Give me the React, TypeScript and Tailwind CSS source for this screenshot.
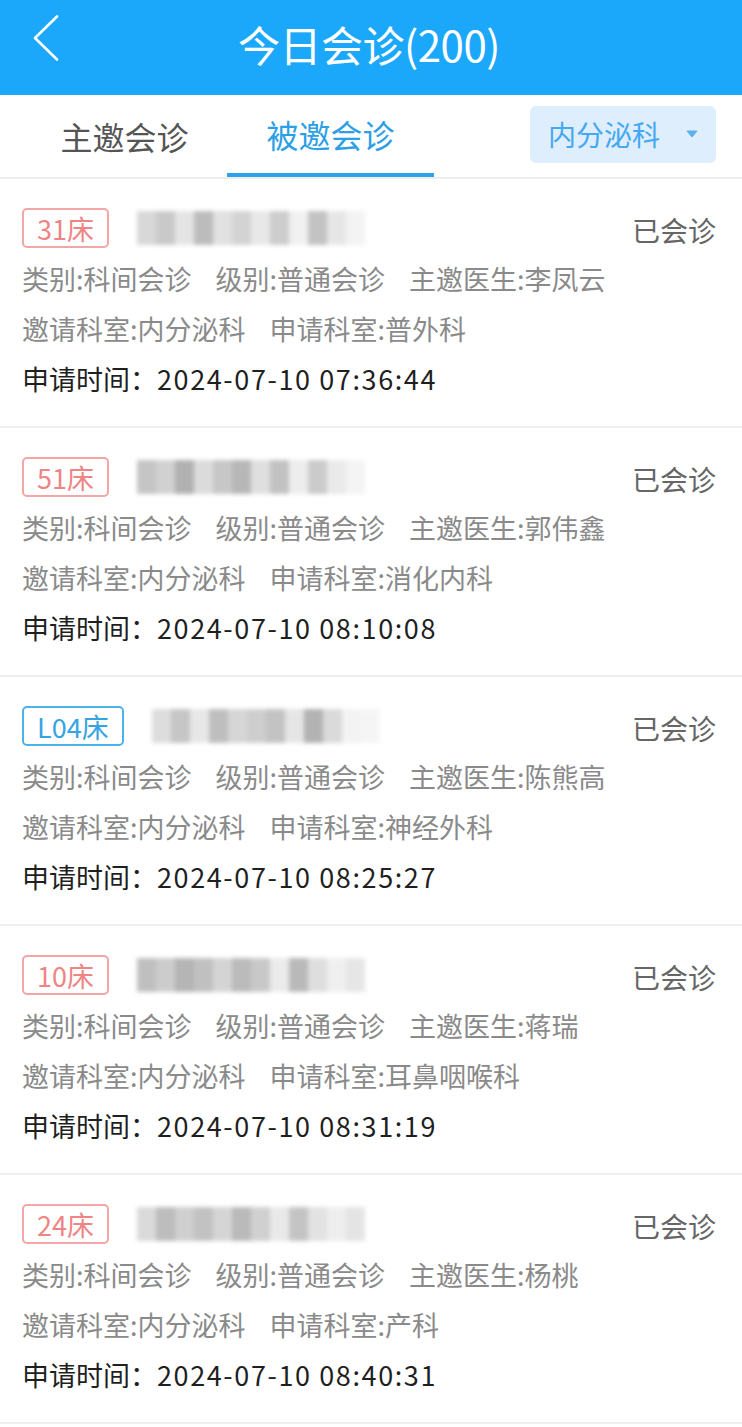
import React from 'react';

type Consult = {
  bed: string;
  tone: 'red' | 'blue';
  doctor: string;
  fromDept: string;
  time: string;
  blur: string[];
};

const consults: Consult[] = [
  {
    bed: '31床',
    tone: 'red',
    doctor: '李凤云',
    fromDept: '普外科',
    time: '2024-07-10 07:36:44',
    blur: ['bg-[#d4d4d4]', 'bg-[#c4c4c4]', 'bg-[#e2e2e2]', 'bg-[#b5b5b5]', 'bg-[#dedede]', 'bg-[#cfcfcf]', 'bg-[#e6e6e6]', 'bg-[#c8c8c8]', 'bg-[#f0f0f0]', 'bg-[#bdbdbd]', 'bg-[#e4e4e4]', 'bg-[#f2f2f2]'],
  },
  {
    bed: '51床',
    tone: 'red',
    doctor: '郭伟鑫',
    fromDept: '消化内科',
    time: '2024-07-10 08:10:08',
    blur: ['bg-[#bfbfbf]', 'bg-[#cdcdcd]', 'bg-[#a9a9a9]', 'bg-[#d8d8d8]', 'bg-[#c2c2c2]', 'bg-[#b0b0b0]', 'bg-[#dcdcdc]', 'bg-[#bcbcbc]', 'bg-[#ececec]', 'bg-[#c6c6c6]', 'bg-[#e8e8e8]', 'bg-[#f3f3f3]'],
  },
  {
    bed: 'L04床',
    tone: 'blue',
    doctor: '陈熊高',
    fromDept: '神经外科',
    time: '2024-07-10 08:25:27',
    blur: ['bg-[#dadada]', 'bg-[#c0c0c0]', 'bg-[#e5e5e5]', 'bg-[#b8b8b8]', 'bg-[#d2d2d2]', 'bg-[#c9c9c9]', 'bg-[#bdbdbd]', 'bg-[#e3e3e3]', 'bg-[#ababab]', 'bg-[#d6d6d6]', 'bg-[#f2f2f2]', 'bg-[#f5f5f5]'],
  },
  {
    bed: '10床',
    tone: 'red',
    doctor: '蒋瑞',
    fromDept: '耳鼻咽喉科',
    time: '2024-07-10 08:31:19',
    blur: ['bg-[#b9b9b9]', 'bg-[#c7c7c7]', 'bg-[#adadad]', 'bg-[#bababa]', 'bg-[#d0d0d0]', 'bg-[#b4b4b4]', 'bg-[#c3c3c3]', 'bg-[#e9e9e9]', 'bg-[#b2b2b2]', 'bg-[#dbdbdb]', 'bg-[#eeeeee]', 'bg-[#e4e4e4]'],
  },
  {
    bed: '24床',
    tone: 'red',
    doctor: '杨桃',
    fromDept: '产科',
    time: '2024-07-10 08:40:31',
    blur: ['bg-[#d6d6d6]', 'bg-[#b6b6b6]', 'bg-[#cacaca]', 'bg-[#bcbcbc]', 'bg-[#d1d1d1]', 'bg-[#b3b3b3]', 'bg-[#cbcbcb]', 'bg-[#e7e7e7]', 'bg-[#bebebe]', 'bg-[#dfdfdf]', 'bg-[#ededed]', 'bg-[#e2e2e2]'],
  },
];

const font = { fontFamily: '"Noto Sans CJK SC", "Noto Sans", sans-serif' };

const BlurredName: React.FC<{ shades: string[] }> = ({ shades }) => (
  <div className="flex h-[34px] blur-[2px] opacity-90">
    {shades.map((s, i) => (
      <div key={i} className={`w-[19px] h-full ${s}`} />
    ))}
  </div>
);

const ConsultCard: React.FC<{ item: Consult }> = ({ item }) => {
  const tagCls =
    item.tone === 'red'
      ? 'border-[#f2a6a6] text-[#ef8484]'
      : 'border-[#4cb2ea] text-[#36a3e2]';
  return (
    <div className="pl-[22px] pr-[26px] pt-[29px] pb-[22px] border-b-2 border-[#efefef]">
      <div className="flex items-center h-[40px]">
        <div className={`h-[40px] px-[13px] flex items-center border-2 rounded-[5px] text-[27px] leading-none ${tagCls}`}>
          {item.bed}
        </div>
        <div className="ml-[28px]">
          <BlurredName shades={item.blur} />
        </div>
        <div className="ml-auto text-[28px] text-[#666666] pt-[4px]">已会诊</div>
      </div>
      <div className="mt-[6px] text-[27px] leading-[50px] text-[#8a8a8a] whitespace-nowrap">
        <div className="flex gap-[24px]">
          <span>类别:科间会诊</span>
          <span>级别:普通会诊</span>
          <span>主邀医生:{item.doctor}</span>
        </div>
        <div className="flex gap-[24px]">
          <span>邀请科室:内分泌科</span>
          <span>申请科室:{item.fromDept}</span>
        </div>
        <div className="text-[#1f1f1f]">
          申请时间：<span className="tracking-[1.6px]">{item.time}</span>
        </div>
      </div>
    </div>
  );
};

export default function App() {
  return (
    <div className="w-[742px] min-h-[1427px] bg-white" style={font}>
      {/* Title bar */}
      <div className="h-[95px] bg-[#1ba8fb] flex items-center relative pb-[8px]">
        <svg className="absolute left-[32px] top-[15px]" width="28" height="46" viewBox="0 0 28 46" fill="none">
          <path d="M25 1.5 L3 23 L25 44.5" stroke="white" strokeWidth="2.6" strokeLinecap="round" strokeLinejoin="round" />
        </svg>
        <div className="flex-1 text-center text-white text-[42px] leading-none tracking-[-0.5px] pr-[4px]">今日会诊(200)</div>
      </div>

      {/* Tabs */}
      <div className="h-[84px] flex items-stretch border-b-2 border-[#ededed] pl-[22px] pr-[26px]">
        <div className="w-[205px] flex items-center justify-center text-[32px] text-[#555555]">主邀会诊</div>
        <div className="w-[207px] flex flex-col items-center">
          <div className="flex-1 flex items-center text-[32px] text-[#2c9fe6]">被邀会诊</div>
          <div className="h-[4px] w-full bg-[#2aa3ec]" />
        </div>
        <div className="ml-auto flex items-center pb-[4px]">
          <div className="w-[186px] h-[57px] rounded-[6px] bg-[#deeefd] flex items-center pl-[18px] pr-[18px]">
            <span className="text-[28px] text-[#45a8f2]">内分泌科</span>
            <svg className="ml-auto" width="12" height="8" viewBox="0 0 12 8">
              <path d="M1 1 L11 1 L6 7 Z" fill="#5aaff2" stroke="#5aaff2" strokeWidth="1" strokeLinejoin="round" />
            </svg>
          </div>
        </div>
      </div>

      {consults.map((c, i) => (
        <ConsultCard key={i} item={c} />
      ))}
    </div>
  );
}
